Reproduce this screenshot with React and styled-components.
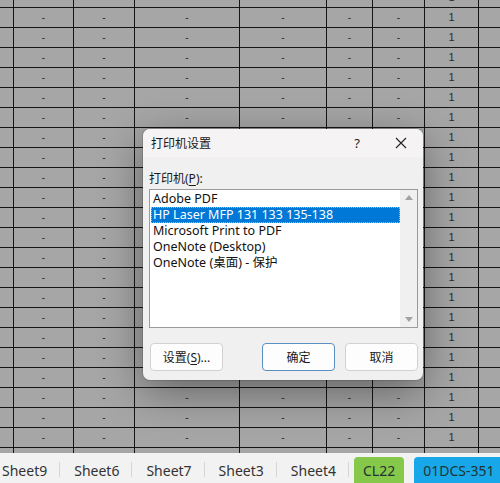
import React from "react";
import styled, { createGlobalStyle } from "styled-components";

const Global = createGlobalStyle`
  html, body { margin: 0; padding: 0; overflow: hidden; }
  body {
    width: 500px;
    height: 483px;
    font-family: "Noto Sans", "Noto Sans CJK SC", sans-serif;
    background: #a5a5a5;
  }
`;

const Page = styled.div`
  position: relative;
  width: 500px;
  height: 483px;
  display: flex;
  flex-direction: column;
  overflow: hidden;
`;

/* ---------- worksheet behind the modal ---------- */

const Sheet = styled.div`
  height: 453px;
  overflow: hidden;
  background: #a6a6a6;
  flex: none;
`;

const Rows = styled.div`
  margin-top: -12px;
  display: flex;
  flex-direction: column;
`;

const Row = styled.div`
  display: grid;
  grid-template-columns: 14px 60px 61px 105px 87px 46px 52px 54px 1fr;
  height: 20px;
  box-sizing: border-box;
  border-bottom: 1px solid #151515;
`;

const Cell = styled.div`
  box-sizing: border-box;
  border-right: ${(p) => (p.$last ? "none" : "1px solid #151515")};
  display: flex;
  align-items: center;
  justify-content: center;
  font-family: "Liberation Sans", Arial, sans-serif;
  font-size: ${(p) => (p.$num ? "11px" : "10px")};
  color: #2a2a2a;
  line-height: 1;
`;

/* ---------- sheet tabs ---------- */

const TabBar = styled.div`
  flex: 1;
  background: #f2f2f2;
  display: flex;
  align-items: flex-end;
  margin-left: -12px;
`;

const Tab = styled.div`
  height: 26px;
  display: flex;
  align-items: center;
  padding: 0 13px 0 14px;
  font-size: 14px;
  color: #333;
  position: relative;
  white-space: nowrap;
  ${(p) =>
    p.$sep &&
    `&::after {
      content: "";
      position: absolute;
      right: 0;
      top: 5px;
      width: 1px;
      height: 15px;
      background: #d6d6d6;
    }`}
`;

const ColorTab = styled.div`
  height: 26px;
  display: flex;
  align-items: center;
  padding: 0 9px;
  margin-left: ${(p) => p.$gap}px;
  font-size: 14px;
  color: #233;
  background: ${(p) => p.$bg};
  border-radius: 4px 4px 0 0;
  white-space: nowrap;
`;

/* ---------- printer setup dialog ---------- */

const Dialog = styled.div`
  position: absolute;
  left: 143px;
  top: 129px;
  width: 280px;
  height: 251px;
  background: #f0f0f0;
  border-radius: 7px;
  box-shadow: 0 12px 44px rgba(0, 0, 0, 0.4), 0 0 0 1px rgba(0, 0, 0, 0.12);
  display: flex;
  flex-direction: column;
  overflow: hidden;
`;

const TitleBar = styled.div`
  height: 28px;
  background: #f5f3f3;
  display: flex;
  align-items: center;
  flex: none;
`;

const Title = styled.div`
  flex: 1;
  padding-left: 8px;
  font-size: 12px;
  color: #1a1a1a;
`;

const TitleButton = styled.div`
  width: 44px;
  height: 28px;
  display: flex;
  align-items: center;
  justify-content: center;
  color: #222;
  font-size: 13px;
`;

const Body = styled.div`
  flex: 1;
  display: flex;
  flex-direction: column;
  padding: 13px 5px 10px 6px;
`;

const Label = styled.div`
  font-size: 12px;
  color: #1a1a1a;
  height: 17px;
  line-height: 17px;
  margin-bottom: 2px;
  u { text-underline-offset: 2px; }
`;

const ListBox = styled.div`
  height: 139px;
  box-sizing: border-box;
  border: 1px solid #9a9a9a;
  background: #fff;
  display: flex;
`;

const Items = styled.div`
  flex: 1;
  padding: 1px 0 0 1px;
  display: flex;
  flex-direction: column;
`;

const Item = styled.div`
  height: 16px;
  line-height: 16px;
  padding-left: 2px;
  font-size: 12.5px;
  color: ${(p) => (p.$sel ? "#fff" : "#111")};
  background: ${(p) => (p.$sel ? "#0078d7" : "transparent")};
  outline: ${(p) => (p.$sel ? "1px dotted #8cc1ff" : "none")};
  outline-offset: -1px;
  white-space: nowrap;
`;

const ScrollBar = styled.div`
  width: 17px;
  background: #f0f0f0;
  display: flex;
  flex-direction: column;
  justify-content: space-between;
  align-items: center;
  padding: 5px 0;
`;

const Arrow = styled.div`
  width: 0;
  height: 0;
  border-left: 4px solid transparent;
  border-right: 4px solid transparent;
  ${(p) =>
    p.$down
      ? "border-top: 5px solid #a3a3a3;"
      : "border-bottom: 5px solid #a3a3a3;"}
`;

const Buttons = styled.div`
  margin-top: 15px;
  display: flex;
  align-items: center;
`;

const Button = styled.div`
  width: 73px;
  height: 28px;
  box-sizing: border-box;
  margin-left: ${(p) => p.$ml || 0}px;
  border: 1px solid ${(p) => (p.$primary ? "#5b8ec2" : "#d2d2d2")};
  border-radius: 4px;
  background: #fdfdfd;
  display: flex;
  align-items: center;
  justify-content: center;
  font-size: 12px;
  color: #1a1a1a;
  u { text-underline-offset: 2px; }
`;

const cols = 9;
const rowCount = 24;

function SheetRow() {
  return (
    <Row>
      {Array.from({ length: cols }).map((_, i) => {
        let text = "";
        if (i >= 1 && i <= 6) text = "-";
        if (i === 7) text = "1";
        return (
          <Cell key={i} $num={i === 7} $last={i === cols - 1}>
            {text}
          </Cell>
        );
      })}
    </Row>
  );
}

const printers = [
  "Adobe PDF",
  "HP Laser MFP 131 133 135-138",
  "Microsoft Print to PDF",
  "OneNote (Desktop)",
  "OneNote (桌面) - 保护",
];

export default function App() {
  return (
    <Page>
      <Global />
      <Sheet>
        <Rows>
          {Array.from({ length: rowCount }).map((_, i) => (
            <SheetRow key={i} />
          ))}
        </Rows>
      </Sheet>
      <TabBar>
        {["Sheet9", "Sheet6", "Sheet7", "Sheet3", "Sheet4"].map((s) => (
          <Tab key={s} $sep>
            {s}
          </Tab>
        ))}
        <ColorTab $bg="#86c84a" $gap={5}>CL22</ColorTab>
        <ColorTab $bg="#18a7e8" $gap={10}>01DCS-351</ColorTab>
      </TabBar>

      <Dialog>
        <TitleBar>
          <Title>打印机设置</Title>
          <TitleButton>?</TitleButton>
          <TitleButton>
            <svg width="12" height="12" viewBox="0 0 12 12">
              <path d="M1 1 L11 11 M11 1 L1 11" stroke="#222" strokeWidth="1.1" />
            </svg>
          </TitleButton>
        </TitleBar>
        <Body>
          <Label>
            打印机(<u>P</u>):
          </Label>
          <ListBox>
            <Items>
              {printers.map((p, i) => (
                <Item key={p} $sel={i === 1}>
                  {p}
                </Item>
              ))}
            </Items>
            <ScrollBar>
              <Arrow />
              <Arrow $down />
            </ScrollBar>
          </ListBox>
          <Buttons>
            <Button $ml={1}>
              设置(<u>S</u>)...
            </Button>
            <Button $primary $ml={39}>确定</Button>
            <Button $ml={10}>取消</Button>
          </Buttons>
        </Body>
      </Dialog>
    </Page>
  );
}
